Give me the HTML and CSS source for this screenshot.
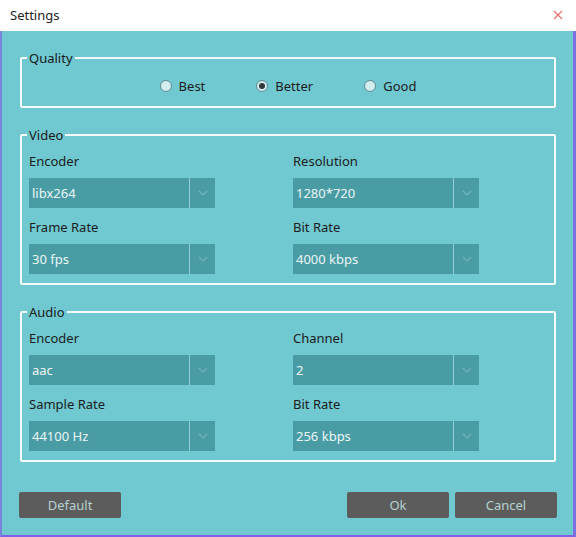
FILE: index.html
```html
<!DOCTYPE html>
<html>
<head>
<meta charset="utf-8">
<link rel="stylesheet" href="styles.css">
</head>
<body>
<div class="dialog">
  <div class="titlebar">
    <span class="title">Settings</span>
    <svg class="close" width="10" height="10" viewBox="0 0 10 10"><path d="M1 1 L9 9 M9 1 L1 9" stroke="#e56b6b" stroke-width="1.1" fill="none"/></svg>
  </div>
  <div class="content">
    <fieldset class="group quality">
      <legend>Quality</legend>
      <div class="radios">
        <label class="radio"><span class="dot"></span>Best</label>
        <label class="radio checked"><span class="dot"></span>Better</label>
        <label class="radio"><span class="dot"></span>Good</label>
      </div>
    </fieldset>
    <fieldset class="group">
      <legend>Video</legend>
      <div class="fields">
        <div class="field"><div class="lbl">Encoder</div><div class="combo"><span class="val">libx264</span><span class="arrow"><svg width="10" height="6" viewBox="0 0 10 6"><path d="M1 1 L5 5 L9 1" stroke="#72b4ba" stroke-width="1.2" fill="none"/></svg></span></div></div>
        <div class="field"><div class="lbl">Resolution</div><div class="combo"><span class="val">1280*720</span><span class="arrow"><svg width="10" height="6" viewBox="0 0 10 6"><path d="M1 1 L5 5 L9 1" stroke="#72b4ba" stroke-width="1.2" fill="none"/></svg></span></div></div>
        <div class="field"><div class="lbl">Frame Rate</div><div class="combo"><span class="val">30 fps</span><span class="arrow"><svg width="10" height="6" viewBox="0 0 10 6"><path d="M1 1 L5 5 L9 1" stroke="#72b4ba" stroke-width="1.2" fill="none"/></svg></span></div></div>
        <div class="field"><div class="lbl">Bit Rate</div><div class="combo"><span class="val">4000 kbps</span><span class="arrow"><svg width="10" height="6" viewBox="0 0 10 6"><path d="M1 1 L5 5 L9 1" stroke="#72b4ba" stroke-width="1.2" fill="none"/></svg></span></div></div>
      </div>
    </fieldset>
    <fieldset class="group">
      <legend>Audio</legend>
      <div class="fields">
        <div class="field"><div class="lbl">Encoder</div><div class="combo"><span class="val">aac</span><span class="arrow"><svg width="10" height="6" viewBox="0 0 10 6"><path d="M1 1 L5 5 L9 1" stroke="#72b4ba" stroke-width="1.2" fill="none"/></svg></span></div></div>
        <div class="field"><div class="lbl">Channel</div><div class="combo"><span class="val">2</span><span class="arrow"><svg width="10" height="6" viewBox="0 0 10 6"><path d="M1 1 L5 5 L9 1" stroke="#72b4ba" stroke-width="1.2" fill="none"/></svg></span></div></div>
        <div class="field"><div class="lbl">Sample Rate</div><div class="combo"><span class="val">44100 Hz</span><span class="arrow"><svg width="10" height="6" viewBox="0 0 10 6"><path d="M1 1 L5 5 L9 1" stroke="#72b4ba" stroke-width="1.2" fill="none"/></svg></span></div></div>
        <div class="field"><div class="lbl">Bit Rate</div><div class="combo"><span class="val">256 kbps</span><span class="arrow"><svg width="10" height="6" viewBox="0 0 10 6"><path d="M1 1 L5 5 L9 1" stroke="#72b4ba" stroke-width="1.2" fill="none"/></svg></span></div></div>
      </div>
    </fieldset>
    <div class="buttons">
      <button class="btn">Default</button>
      <div class="right">
        <button class="btn">Ok</button>
        <button class="btn">Cancel</button>
      </div>
    </div>
  </div>
</div>
</body>
</html>
```
FILE: styles.css
```css
html, body {
  margin: 0;
  padding: 0;
}
body {
  font-family: "Noto Sans", "Open Sans", sans-serif;
  font-size: 13px;
  color: #1c1c1c;
}
.dialog {
  width: 576px;
  height: 537px;
  display: flex;
  flex-direction: column;
  background: #fff;
}
.titlebar {
  height: 31px;
  display: flex;
  align-items: center;
  justify-content: space-between;
  padding: 0 13px 1px 10px;
  box-sizing: border-box;
}
.title {
  font-size: 13px;
  color: #222;
}
.close {
  display: block;
}
.content {
  flex: 1;
  background: #70c8d0;
  border-left: 2px solid #7b84dc;
  border-right: 3px solid #7b70e0;
  border-bottom: 2px solid #8062e6;
  padding: 19px 17px 0 18px;
  display: flex;
  flex-direction: column;
}
.group {
  margin: 0 0 19px 0;
  border: 2px solid #f4fbfb;
  border-radius: 2px;
  padding: 0 7px 0 5px;
  min-width: 0;
}
.group legend {
  padding: 0 2px;
  line-height: 16px;
  font-size: 13px;
  color: #1a1a1a;
}
.quality .radios {
  display: flex;
  justify-content: center;
  gap: 51px;
  padding: 11px 0 11px 0;
  margin-left: -5px;
  margin-right: -7px;
}
.radio {
  display: flex;
  align-items: center;
  gap: 7px;
  line-height: 18px;
}
.dot {
  width: 10px;
  height: 10px;
  border: 1px solid #5f8a90;
  border-radius: 50%;
  background: #d2eef0;
  box-sizing: content-box;
  display: flex;
  align-items: center;
  justify-content: center;
}
.checked .dot::after {
  content: "";
  width: 6px;
  height: 6px;
  border-radius: 50%;
  background: #2e3a3c;
}
.fields {
  display: grid;
  grid-template-columns: 264px 186px;
  row-gap: 10px;
  padding: 9px 0 9px 2px;
}
.lbl {
  line-height: 18px;
  margin-bottom: 8px;
}
.combo {
  width: 186px;
  height: 30px;
  background: #4a9ca4;
  display: flex;
  align-items: center;
  color: #eaf6f6;
}
.val {
  flex: 1;
  padding-left: 3px;
}
.arrow {
  width: 25px;
  height: 30px;
  border-left: 1px solid #8fcdd2;
  display: flex;
  align-items: center;
  justify-content: center;
}
.buttons {
  margin-top: 11px;
  display: flex;
  justify-content: space-between;
  margin-left: -1px;
  margin-right: -1px;
}
.right {
  display: flex;
  gap: 6px;
}
.btn {
  width: 102px;
  height: 26px;
  background: #5c5c5c;
  color: #b6d0d0;
  border: none;
  border-radius: 2px;
  font-family: "Noto Sans", "Open Sans", sans-serif;
  font-size: 13px;
  padding: 0;
}
```
